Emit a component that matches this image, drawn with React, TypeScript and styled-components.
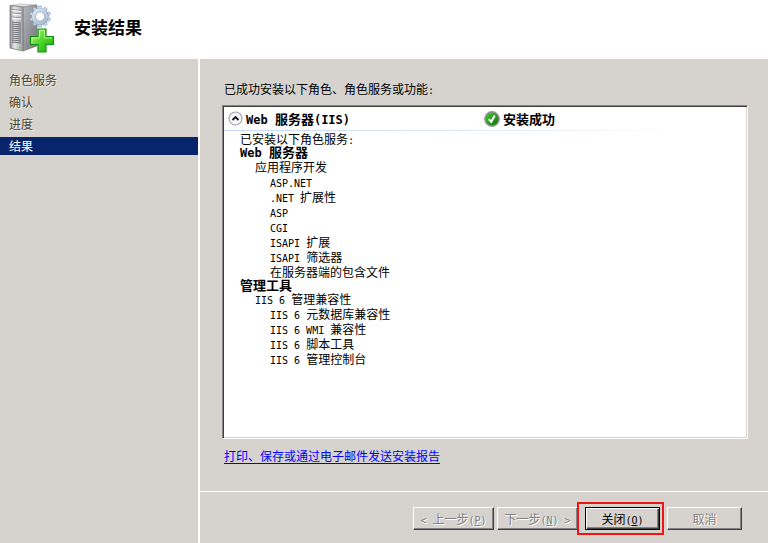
import React from 'react';
import styled, { createGlobalStyle, css } from 'styled-components';

const FACE = '#d6d3ce';
const NAVY = '#08246b';

const GlobalStyle = createGlobalStyle`
  * { box-sizing: border-box; }
  body {
    margin: 0;
    background: ${FACE};
    color: #000;
    font: 12px/15px "Noto Sans CJK SC", sans-serif;
  }
  ul { list-style: none; margin: 0; padding: 0; }
`;

const Page = styled.div`
  display: grid;
  grid-template-rows: 59px 1fr;
  min-height: 100vh;
`;

const Header = styled.header`
  display: flex;
  align-items: center;
  gap: 18px;
  padding: 0 8px 6px;
  background: #fff;
`;

const Title = styled.h1`
  margin: 0;
  font-size: 17px;
  line-height: 20px;
  font-weight: 700;
`;

const Body = styled.div`
  display: grid;
  grid-template-columns: 200px 1fr;
`;

const Sidebar = styled.nav`
  border-right: 2px solid #fff;
  padding-top: 12px;
`;

const Steps = styled.ul`
  display: flex;
  flex-direction: column;
  gap: 4px;
`;

const Step = styled.li<{ $active?: boolean }>`
  padding: 0 9px;
  line-height: 18px;
  color: #4a4836;
  text-shadow: 1px 1px 0 #eceae6;
  ${(p) =>
    p.$active &&
    css`
      background: ${NAVY};
      color: #fff;
      text-shadow: none;
    `}
`;

const Main = styled.main`
  display: flex;
  flex-direction: column;
  min-width: 0;
`;

const Content = styled.section`
  flex: 1;
  display: flex;
  flex-direction: column;
  padding: 22px 20px 28px 22px;
`;

const Intro = styled.p`
  margin: 0 0 9px 2px;
`;

const ResultBox = styled.div`
  flex: 1;
  border: 1px solid #848284;
  border-right-color: #fff;
  border-bottom-color: #fff;
  background: #fff;
  box-shadow: inset 1px 1px 0 #424142, inset -1px -1px 0 ${FACE};
  padding: 1px;
`;

const GroupHeader = styled.div`
  display: grid;
  grid-template-columns: 256px 1fr;
  align-items: center;
  height: 24px;
  padding-left: 4px;
  border-bottom: 1px solid;
  border-image: linear-gradient(90deg, #c6d7f7, #e4ecf8 55%, #fff 88%) 1;
`;

const Cell = styled.div`
  display: flex;
  align-items: center;
  gap: 3px;
  font-size: 13px;
  font-weight: 700;
`;

const ToggleButton = styled.button`
  display: flex;
  padding: 0;
  border: 0;
  background: none;
`;

const Details = styled.ul`
  padding-left: 16px;
`;

const Row = styled.li<{ $level: number; $heading?: boolean }>`
  padding-left: ${(p) => p.$level * 15}px;
  line-height: 15px;
  white-space: nowrap;
  ${(p) =>
    p.$heading &&
    css`
      font-size: 13px;
      font-weight: 700;
      line-height: 12px;
    `}
`;

const Latin = styled.span<{ $bold?: boolean }>`
  font-family: "DejaVu Sans Mono", monospace;
  font-size: ${(p) => (p.$bold ? 12 : 10)}px;
  line-height: 1;
  white-space: pre;
`;

const ReportLink = styled.a`
  align-self: flex-start;
  margin: 9px 0 0 2px;
  color: #00f;
  text-underline-offset: 2px;
`;

const Footer = styled.footer`
  display: flex;
  justify-content: flex-end;
  gap: 7px;
  padding: 15px 26px 13px;
  border-top: 1px solid #fff;
`;

const Pair = styled.div`
  display: flex;
  gap: 3px;
`;

const Button = styled.button<{ $wide?: boolean; $default?: boolean }>`
  display: block;
  width: ${(p) => (p.$wide ? 81 : 75)}px;
  height: 23px;
  padding: 0;
  border: 1px solid;
  border-color: #fff #424142 #424142 #fff;
  box-shadow: inset -1px -1px 0 #848284;
  background: ${FACE};
  color: #000;
  font: inherit;
  white-space: nowrap;
  &:disabled {
    color: #848284;
    text-shadow: 1px 1px 0 #fff;
  }
  ${(p) =>
    p.$default &&
    css`
      border-color: #000;
      box-shadow: inset 1px 1px 0 #fff, inset -1px -1px 0 #424142, inset -2px -2px 0 #848284;
    `}
`;

const Highlight = styled.div`
  position: relative;
  &::after {
    content: '';
    position: absolute;
    inset: -5px -4px -5px -8px;
    border: 2px solid #f01414;
    pointer-events: none;
  }
`;

/* Western characters take half the width of a Chinese one. */
function Mixed({ text, bold }: { text: string; bold?: boolean }) {
  return (
    <>
      {text.split(/([\x20-\x7e]+)/).map((part, i) =>
        i % 2 ? (
          <Latin key={i} $bold={bold}>
            {part}
          </Latin>
        ) : (
          part
        ),
      )}
    </>
  );
}

function AccessKey({ letter }: { letter: string }) {
  return (
    <Latin>
      (<u>{letter}</u>)
    </Latin>
  );
}

function ServerIcon() {
  const teeth = Array.from({ length: 10 }, (_, i) => i * 36);
  return (
    <svg width="48" height="52" viewBox="0 0 48 52" aria-hidden="true">
      <defs>
        <linearGradient id="front" x1="0" x2="1">
          <stop offset="0" stopColor="#8d8f93" />
          <stop offset=".35" stopColor="#e6e7e9" />
          <stop offset="1" stopColor="#a0a2a7" />
        </linearGradient>
        <linearGradient id="side" x1="0" x2="1" y2="1">
          <stop offset="0" stopColor="#b9bbc0" />
          <stop offset="1" stopColor="#707278" />
        </linearGradient>
        <linearGradient id="plus" x2="1" y2="1">
          <stop offset="0" stopColor="#c4f77c" />
          <stop offset=".45" stopColor="#55dc2e" />
          <stop offset="1" stopColor="#18a80c" />
        </linearGradient>
        <linearGradient id="gear" x2="1" y2="1">
          <stop offset="0" stopColor="#dfeaf5" />
          <stop offset="1" stopColor="#a4b8cd" />
        </linearGradient>
      </defs>
      <path d="M2 4.500 13 3 29 4 15 6Z" fill="#e3e4e6" stroke="#9b9da1" strokeWidth=".5" />
      <path d="M15 6 29 4V45L15 50Z" fill="url(#side)" stroke="#74767b" strokeWidth=".6" />
      <path d="M2 4.500 15 6V50L2 47Z" fill="url(#front)" stroke="#77797e" strokeWidth=".8" />
      <path d="M4 8.500 13 9.500M4 12 13 13M4 16 13 17" stroke="#8a8c91" strokeWidth="1" />
      <path d="M4 9.500 13 10.500M4 13 13 14M4 17 13 18" stroke="#fff" strokeWidth="1" />
      {[21, 23, 25, 27, 29, 31, 33, 35, 37, 39, 41].map((y) => (
        <path key={y} d={`M4 ${y} 13 ${y + 1}`} stroke="#63656b" strokeWidth=".9" />
      ))}
      <path d="M11 45.500 14 46.200V48L11 47.300Z" fill="#59e718" />
      <g transform="translate(32 15.500)">
        {teeth.map((angle) => (
          <path
            key={angle}
            d="M-2-7-1.300-10.500H1.300L2-7Z"
            transform={`rotate(${angle})`}
            fill="#cfdcea"
            stroke="#8299b3"
            strokeWidth=".6"
          />
        ))}
        <circle r="6.500" fill="none" stroke="#8299b3" strokeWidth="4.200" />
        <circle r="6.500" fill="none" stroke="url(#gear)" strokeWidth="3.400" />
        <circle r="4.500" fill="#fff" stroke="#8ba2bb" strokeWidth=".6" />
      </g>
      <path
        d="M30 28H38V35.500H45.500V43.500H38V51H30V43.500H22.500V35.500H30Z"
        fill="url(#plus)"
        stroke="#159012"
        strokeWidth="1.200"
      />
      <path d="M24 42V37H31.500V29.500H36.500V37H44" fill="none" stroke="#c8fa9c" strokeWidth=".8" />
    </svg>
  );
}

function CollapseIcon() {
  return (
    <svg width="15" height="15" viewBox="0 0 15 15" aria-hidden="true">
      <circle cx="7.500" cy="7.500" r="6.500" fill="#f7f6fa" stroke="#aaa3ad" strokeWidth="1.200" />
      <path d="M4.500 9 7.500 6 10.500 9" fill="none" stroke="#18181c" strokeWidth="1.800" />
    </svg>
  );
}

function SuccessIcon() {
  return (
    <svg width="16" height="16" viewBox="0 0 16 16" aria-hidden="true">
      <defs>
        <linearGradient id="ok" x2="1" y2="1">
          <stop offset="0" stopColor="#4fc83c" />
          <stop offset="1" stopColor="#086e06" />
        </linearGradient>
      </defs>
      <circle cx="8" cy="8" r="7.200" fill="url(#ok)" stroke="#96949b" strokeWidth="1.400" />
      <path d="M4.800 8.200 7.200 11 10.700 4.500" fill="none" stroke="#fff" strokeWidth="2" />
    </svg>
  );
}

const steps = ['角色服务', '确认', '进度', '结果'];

const rows = [
  { text: '已安装以下角色服务:', level: 0 },
  { text: 'Web 服务器', level: 0, heading: true },
  { text: '应用程序开发', level: 1 },
  { text: 'ASP.NET', level: 2 },
  { text: '.NET 扩展性', level: 2 },
  { text: 'ASP', level: 2 },
  { text: 'CGI', level: 2 },
  { text: 'ISAPI 扩展', level: 2 },
  { text: 'ISAPI 筛选器', level: 2 },
  { text: '在服务器端的包含文件', level: 2 },
  { text: '管理工具', level: 0, heading: true },
  { text: 'IIS 6 管理兼容性', level: 1 },
  { text: 'IIS 6 元数据库兼容性', level: 2 },
  { text: 'IIS 6 WMI 兼容性', level: 2 },
  { text: 'IIS 6 脚本工具', level: 2 },
  { text: 'IIS 6 管理控制台', level: 2 },
];

export default function App() {
  return (
    <Page>
      <GlobalStyle />
      <Header>
        <ServerIcon />
        <Title>安装结果</Title>
      </Header>
      <Body>
        <Sidebar>
          <Steps>
            {steps.map((step) => (
              <Step key={step} $active={step === '结果'}>
                {step}
              </Step>
            ))}
          </Steps>
        </Sidebar>
        <Main>
          <Content>
            <Intro>
              <Mixed text="已成功安装以下角色、角色服务或功能:" />
            </Intro>
            <ResultBox>
              <GroupHeader>
                <Cell>
                  <ToggleButton type="button" aria-label="折叠" aria-expanded="true">
                    <CollapseIcon />
                  </ToggleButton>
                  <span>
                    <Mixed text="Web 服务器(IIS)" bold />
                  </span>
                </Cell>
                <Cell>
                  <SuccessIcon />
                  安装成功
                </Cell>
              </GroupHeader>
              <Details>
                {rows.map((row) => (
                  <Row key={row.text} $level={row.level} $heading={row.heading}>
                    <Mixed text={row.text} bold={row.heading} />
                  </Row>
                ))}
              </Details>
            </ResultBox>
            <ReportLink href="#report">打印、保存或通过电子邮件发送安装报告</ReportLink>
          </Content>
          <Footer>
            <Pair>
              <Button type="button" $wide disabled>
                <Latin>{'< '}</Latin>上一步
                <AccessKey letter="P" />
              </Button>
              <Button type="button" $wide disabled>
                下一步
                <AccessKey letter="N" />
                <Latin>{' >'}</Latin>
              </Button>
            </Pair>
            <Highlight>
              <Button type="button" $default>
                关闭
                <AccessKey letter="O" />
              </Button>
            </Highlight>
            <Button type="button" disabled>
              取消
            </Button>
          </Footer>
        </Main>
      </Body>
    </Page>
  );
}
